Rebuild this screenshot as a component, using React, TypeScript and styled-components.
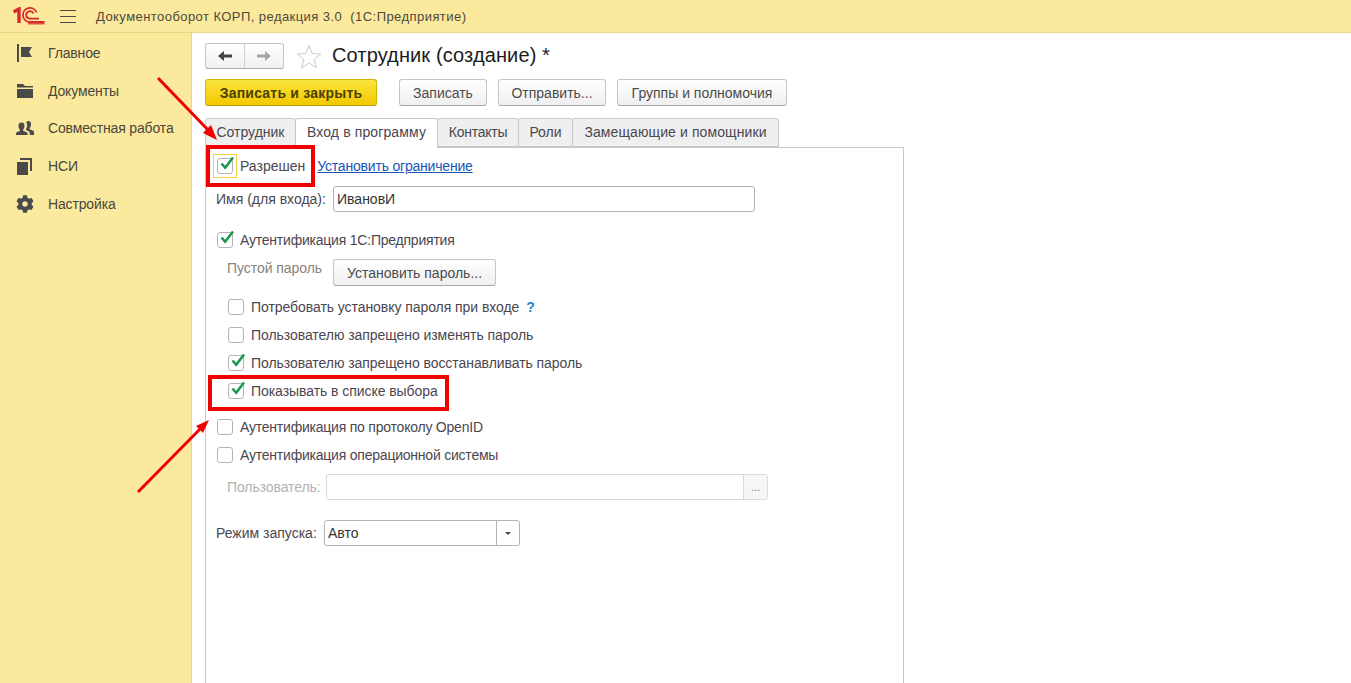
import React from "react";
import styled, { createGlobalStyle } from "styled-components";
import { FaCog } from "react-icons/fa";

const GlobalStyle = createGlobalStyle`
  html, body {
    margin: 0;
    padding: 0;
    background: #fff;
    overflow: hidden;
  }
  body {
    font-family: "Liberation Sans", Arial, sans-serif;
    font-size: 14px;
    color: #4b4650;
  }
`;

const Page = styled.div`
  position: relative;
  width: 1351px;
  height: 683px;
  overflow: hidden;
  display: flex;
  flex-direction: column;
`;

const Header = styled.header`
  flex: none;
  height: 32px;
  display: flex;
  align-items: center;
  background: #fbe99d;
  border-bottom: 1px solid #e9d582;
`;

const Logo = styled.svg`
  width: 32px;
  height: 18px;
  margin-left: 13px;
`;

const Burger = styled.div`
  width: 16px;
  height: 13px;
  margin-left: 15px;
  border-top: 1px solid #4a4a42;
  border-bottom: 1px solid #4a4a42;
  box-sizing: border-box;
  position: relative;
  &::after {
    content: "";
    position: absolute;
    left: 0;
    right: 0;
    top: 5px;
    height: 1px;
    background: #4a4a42;
  }
`;

const AppTitle = styled.div`
  margin-left: 20px;
  font-size: 13px;
  letter-spacing: 0.44px;
  white-space: pre;
  color: #4f4a3c;
`;

const Body = styled.div`
  flex: 1;
  display: flex;
  min-height: 0;
`;

const Sidebar = styled.nav`
  flex: none;
  width: 191px;
  padding-top: 1px;
  background: #fbe99d;
  border-right: 1px solid #e9d582;
`;

const NavItem = styled.div`
  height: 37.7px;
  display: flex;
  align-items: center;
  padding-left: 16px;
  font-size: 14px;
  letter-spacing: -0.15px;
  color: #4a473c;
  svg {
    flex: none;
    width: 18px;
    height: 18px;
    margin-right: 14px;
    color: #4a4a4a;
  }
`;

const Main = styled.main`
  flex: 1;
  min-width: 0;
  padding: 10px 0 0 13px;
  display: flex;
  flex-direction: column;
`;

const TitleBar = styled.div`
  height: 26px;
  display: flex;
  align-items: center;
`;

const HistoryGroup = styled.div`
  width: 79px;
  height: 26px;
  box-sizing: border-box;
  display: flex;
  border: 1px solid #c4c4c4;
  border-bottom-color: #a8a8a8;
  border-radius: 3px;
  background: linear-gradient(#ffffff, #f1f1f1);
`;

const HistoryButton = styled.div<{ $muted?: boolean }>`
  flex: 1;
  display: flex;
  align-items: center;
  justify-content: center;
  color: ${(p) => (p.$muted ? "#a6a6a6" : "#444")};
  & + & {
    border-left: 1px solid #d2d2d2;
  }
  svg {
    width: 16px;
    height: 12px;
  }
`;

const StarIcon = styled.svg`
  width: 26px;
  height: 25px;
  margin-left: 12px;
`;

const FormTitle = styled.h1`
  margin: 0 0 2px 10px;
  font-size: 20px;
  font-weight: 400;
  letter-spacing: 0.12px;
  color: #1c1c1c;
`;

const CommandBar = styled.div`
  height: 27px;
  margin-top: 10px;
  display: flex;
  align-items: center;
`;

const Button = styled.div<{ $width: number; $gap?: number }>`
  width: ${(p) => p.$width}px;
  margin-left: ${(p) => p.$gap ?? 0}px;
  height: 27px;
  box-sizing: border-box;
  display: flex;
  align-items: center;
  justify-content: center;
  font-size: 14px;
  letter-spacing: 0;
  white-space: nowrap;
  color: #4b4b4b;
  border: 1px solid #c6c6c6;
  border-bottom-color: #a6a6a6;
  border-radius: 3px;
  background: linear-gradient(#ffffff, #efefef);
`;

const PrimaryButton = styled(Button)`
  font-weight: 700;
  letter-spacing: 0.22px;
  color: #4a4200;
  border-color: #d3b400;
  border-bottom-color: #b89c00;
  background: linear-gradient(#fbe43c, #f3c800);
`;

const TabStrip = styled.div`
  height: 29px;
  margin-top: 12px;
  display: flex;
  align-items: flex-end;
  position: relative;
  z-index: 1;
`;

const Tab = styled.div<{ $width: number; $active?: boolean; $track?: number }>`
  width: ${(p) => p.$width}px;
  height: ${(p) => (p.$active ? 30 : 29)}px;
  margin-bottom: ${(p) => (p.$active ? -1 : 0)}px;
  box-sizing: border-box;
  display: flex;
  align-items: center;
  justify-content: center;
  font-size: 14px;
  letter-spacing: ${(p) => p.$track ?? 0}px;
  white-space: nowrap;
  color: #4b4650;
  background: ${(p) => (p.$active ? "#fff" : "#efefef")};
  border: 1px solid #c8c8c8;
  border-bottom: ${(p) => (p.$active ? "none" : "1px solid #c8c8c8")};
  border-radius: 3px 3px 0 0;
  padding-bottom: ${(p) => (p.$active ? 3 : 2)}px;
  & + & {
    margin-left: -1px;
  }
`;

const Panel = styled.section`
  flex: 1;
  width: 699px;
  box-sizing: border-box;
  border: 1px solid #c8c8c8;
  border-bottom: none;
  padding: 4px 0 0 10px;
`;

const Row = styled.div<{ $top?: number; $indent?: number; $height?: number; $track?: number }>`
  height: ${(p) => p.$height ?? 28}px;
  margin-top: ${(p) => p.$top ?? 0}px;
  margin-left: ${(p) => p.$indent ?? 0}px;
  display: flex;
  align-items: center;
  font-size: 14px;
  letter-spacing: ${(p) => p.$track ?? 0}px;
  white-space: nowrap;
`;

const Box = styled.span<{ $focused?: boolean }>`
  flex: none;
  position: relative;
  width: 16px;
  height: 16px;
  margin: 0 7px 0 1px;
  box-sizing: border-box;
  border: 1px solid #b4b4b4;
  border-radius: 3px;
  background: #fff;
  svg {
    position: absolute;
    left: 0;
    top: -4px;
    width: 17px;
    height: 17px;
  }
  ${(p) =>
    p.$focused &&
    `&::before {
      content: "";
      position: absolute;
      inset: -5px;
      border: 1px solid #f2cf45;
    }`}
`;

const Link = styled.a`
  margin-left: 12px;
  letter-spacing: -0.2px;
  color: #1a55b8;
  text-decoration: underline;
`;

const Help = styled.span`
  margin-left: 7px;
  font-weight: 700;
  color: #2a84c8;
`;

const FieldLabel = styled.span<{ $width: number; $pad?: number; $muted?: boolean }>`
  flex: none;
  width: ${(p) => p.$width}px;
  padding-left: ${(p) => p.$pad ?? 0}px;
  box-sizing: border-box;
  color: ${(p) => (p.$muted ? "#b2b2b2" : "#4b4650")};
  letter-spacing: ${(p) => (p.$muted ? -0.1 : 0)}px;
`;

const Hint = styled(FieldLabel)`
  color: #8a8378;
  letter-spacing: -0.06px;
  align-self: flex-start;
  padding-top: 1px;
`;

const Input = styled.div<{ $width: number; $disabled?: boolean }>`
  flex: none;
  width: ${(p) => p.$width}px;
  height: 26px;
  box-sizing: border-box;
  display: flex;
  align-items: center;
  padding-left: 3px;
  color: #333;
  background: #fff;
  border: 1px solid ${(p) => (p.$disabled ? "#dadada" : "#b4b4b4")};
  border-radius: 3px;
`;

const InputAction = styled.span`
  margin-left: auto;
  align-self: stretch;
  width: 23px;
  display: flex;
  align-items: center;
  justify-content: center;
  color: #777;
  font-size: 11px;
  border-left: 1px solid #dadada;
  background: #f6f6f6;
  border-radius: 0 3px 3px 0;
`;

const SelectCaret = styled.span`
  margin-left: auto;
  align-self: stretch;
  width: 22px;
  display: flex;
  align-items: center;
  justify-content: center;
  border-left: 1px solid #b4b4b4;
  &::after {
    content: "";
    border-left: 3px solid transparent;
    border-right: 3px solid transparent;
    border-top: 3px solid #444;
  }
`;

const Callout = styled.div<{ $x: number; $y: number; $w: number; $h: number }>`
  position: absolute;
  left: ${(p) => p.$x}px;
  top: ${(p) => p.$y}px;
  width: ${(p) => p.$w}px;
  height: ${(p) => p.$h}px;
  box-sizing: border-box;
  border: 4px solid #f00000;
  pointer-events: none;
  z-index: 2;
`;

const ArrowLayer = styled.svg`
  position: absolute;
  left: 0;
  top: 0;
  width: 1351px;
  height: 683px;
  pointer-events: none;
  z-index: 3;
`;

const Check = () => (
  <svg viewBox="0 0 17 17">
    <path d="M3.5 8.5 L7.2 12.8 L15 2.5" fill="none" stroke="#16994f" strokeWidth="2.6" />
  </svg>
);

const CheckRow = ({
  label,
  checked,
  indent,
  top,
  track = -0.06,
  children,
}: {
  label: string;
  checked?: boolean;
  indent?: number;
  top?: number;
  track?: number;
  children?: React.ReactNode;
}) => (
  <Row $indent={indent} $top={top} $track={track}>
    <Box>{checked && <Check />}</Box>
    {label}
    {children}
  </Row>
);

const navIcons = {
  flag: (
    <svg viewBox="0 0 18 18">
      <path d="M1 0h2v19H1zM5 3h11l-3 5 3 5H5z" fill="currentColor" />
    </svg>
  ),
  folder: (
    <svg viewBox="0 0 18 18">
      <path d="M1 2h6l2 2h8v1.5H1zM1 7h16v9H1z" fill="currentColor" />
    </svg>
  ),
  people: (
    <svg viewBox="0 0 18 18">
      <path
        d="M5.5 3.5a3 3.2 0 0 1 3 3.4c0 1.6-.7 3-1.4 3.6v1.2l3.6 1.6c.6.3.9.8.9 1.4V16H0v-1.3c0-.6.3-1.1.9-1.4l3-1.6v-1.2c-.7-.6-1.4-2-1.4-3.6a3 3.2 0 0 1 3-3.4z"
        fill="currentColor"
      />
      <path
        d="M12 2a3 3.2 0 0 1 3 3.4c0 1.6-.7 3-1.4 3.6v1.2l3.5 1.6c.6.3.9.8.9 1.4V16h-4.2v-1.6c0-1-.5-1.8-1.3-2.2l-2.4-1.2V9.6c.6-.8 1.1-1.8 1.1-3 0-1.2-.4-2.2-1-3A3 3 0 0 1 12 2z"
        fill="currentColor"
      />
    </svg>
  ),
  copy: (
    <svg viewBox="0 0 18 18">
      <path d="M1 5h11v13H1zM4 1h12v13h-2V3H4z" fill="currentColor" />
    </svg>
  ),
};

const tabs = [
  { label: "Сотрудник", width: 91 },
  { label: "Вход в программу", width: 143, active: true, track: 0.12 },
  { label: "Контакты", width: 82, track: -0.25 },
  { label: "Роли", width: 55 },
  { label: "Замещающие и помощники", width: 207, track: 0.1 },
];

const AUTH_TRACK = -0.22;

export default function App() {
  return (
    <Page>
      <GlobalStyle />
      <Header>
        <Logo viewBox="0 0 32 18" fill="none" stroke="#d9292c">
          <path d="M0.5 5 L6 2 V16" strokeWidth="3.4" />
          <path d="M23.5 5.5 A7 7 0 1 0 16.5 15 H31.5" strokeWidth="1.8" />
          <path d="M20.3 6.5 A3.7 3.7 0 1 0 16.5 11.6 H26" strokeWidth="1.8" />
          <path d="M15 16.8 H31.5" strokeWidth="1.2" />
        </Logo>
        <Burger />
        <AppTitle>Документооборот КОРП, редакция 3.0  (1С:Предприятие)</AppTitle>
      </Header>
      <Body>
        <Sidebar>
          <NavItem>{navIcons.flag}Главное</NavItem>
          <NavItem>{navIcons.folder}Документы</NavItem>
          <NavItem>{navIcons.people}Совместная работа</NavItem>
          <NavItem>{navIcons.copy}НСИ</NavItem>
          <NavItem>
            <FaCog />
            Настройка
          </NavItem>
        </Sidebar>
        <Main>
          <TitleBar>
            <HistoryGroup>
              <HistoryButton>
                <svg viewBox="0 0 16 12">
                  <path d="M1 6 L7 1 V4.5 H15 V7.5 H7 V11 Z" fill="currentColor" />
                </svg>
              </HistoryButton>
              <HistoryButton $muted>
                <svg viewBox="0 0 16 12">
                  <path d="M15 6 L9 1 V4.5 H1 V7.5 H9 V11 Z" fill="currentColor" />
                </svg>
              </HistoryButton>
            </HistoryGroup>
            <StarIcon viewBox="0 0 26 25">
              <path
                d="M13 1.5 L16.2 9.6 L24.8 10 L18.1 15.4 L20.4 23.7 L13 19 L5.6 23.7 L7.9 15.4 L1.2 10 L9.8 9.6 Z"
                fill="#fff"
                stroke="#c9c9c9"
              />
            </StarIcon>
            <FormTitle>Сотрудник (создание) *</FormTitle>
          </TitleBar>
          <CommandBar>
            <PrimaryButton $width={172}>Записать и закрыть</PrimaryButton>
            <Button $width={88} $gap={22}>Записать</Button>
            <Button $width={108} $gap={11}>Отправить...</Button>
            <Button $width={170} $gap={11}>Группы и полномочия</Button>
          </CommandBar>
          <TabStrip>
            {tabs.map((tab) => (
              <Tab key={tab.label} $width={tab.width} $active={tab.active} $track={tab.track}>
                {tab.label}
              </Tab>
            ))}
          </TabStrip>
          <Panel>
            <Row>
              <Box $focused>
                <Check />
              </Box>
              Разрешен
              <Link>Установить ограничение</Link>
            </Row>
            <Row $top={6} $height={26}>
              <FieldLabel $width={117}>Имя (для входа):</FieldLabel>
              <Input $width={422}>ИвановИ</Input>
            </Row>
            <CheckRow label="Аутентификация 1С:Предприятия" checked track={AUTH_TRACK} top={14} />
            <Row $top={5} $height={27}>
              <Hint $width={117} $pad={11}>Пустой пароль</Hint>
              <Button $width={163}>Установить пароль...</Button>
            </Row>
            <CheckRow label="Потребовать установку пароля при входе" indent={11} top={7}>
              <Help>?</Help>
            </CheckRow>
            <CheckRow label="Пользователю запрещено изменять пароль" indent={11} />
            <CheckRow label="Пользователю запрещено восстанавливать пароль" checked indent={11} />
            <CheckRow label="Показывать в списке выбора" checked indent={11} />
            <CheckRow label="Аутентификация по протоколу OpenID" track={AUTH_TRACK} top={8} />
            <CheckRow label="Аутентификация операционной системы" track={AUTH_TRACK} />
            <Row $top={5} $height={26}>
              <FieldLabel $width={110} $pad={11} $muted>Пользователь:</FieldLabel>
              <Input $width={442} $disabled>
                <InputAction>...</InputAction>
              </Input>
            </Row>
            <Row $top={20} $height={26}>
              <FieldLabel $width={108}>Режим запуска:</FieldLabel>
              <Input $width={196}>
                Авто
                <SelectCaret />
              </Input>
            </Row>
          </Panel>
        </Main>
      </Body>
      <Callout $x={206} $y={145} $w={109} $h={42} />
      <Callout $x={208} $y={375} $w={241} $h={36} />
      <ArrowLayer viewBox="0 0 1351 683">
        <path d="M158 78 L210 132" stroke="#f00000" strokeWidth="3" />
        <path d="M217 140 L203 133 L211 125 Z" fill="#f00000" />
        <path d="M138 492 L203 426" stroke="#f00000" strokeWidth="3" />
        <path d="M209 420 L203 433 L196 426 Z" fill="#f00000" />
      </ArrowLayer>
    </Page>
  );
}
